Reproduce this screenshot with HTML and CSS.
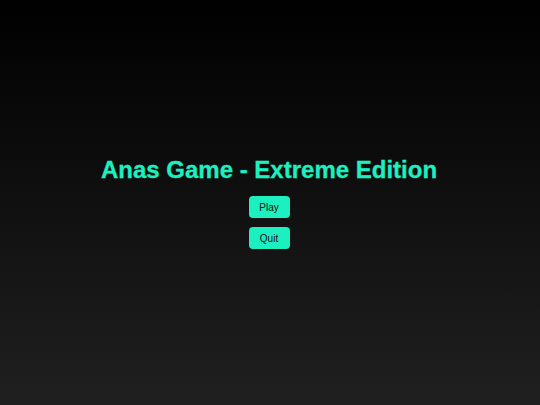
FILE: index.html
```html
<!DOCTYPE html>
<html>
<head>
<meta charset="utf-8">
<link rel="stylesheet" href="styles.css">
</head>
<body>
<div class="screen">
  <h1 class="title">Anas Game - Extreme Edition</h1>
  <div class="menu">
    <button class="btn">Play</button>
    <button class="btn">Quit</button>
  </div>
</div>
</body>
</html>
```
FILE: styles.css
```css
html, body {
  margin: 0;
  padding: 0;
  width: 540px;
  height: 405px;
  overflow: hidden;
}
body {
  background: linear-gradient(to bottom, #000000, #202020);
  font-family: "Liberation Sans", Arial, sans-serif;
}
.screen {
  height: 405px;
  display: flex;
  flex-direction: column;
  align-items: center;
  justify-content: center;
}
.title {
  margin: 0 0 12px 0;
  color: #1cf0c0;
  font-size: 24px;
  font-weight: bold;
  line-height: 28px;
  -webkit-text-stroke: 0.3px #1cf0c0;
  transform: translateX(-1px);
}
.menu {
  display: flex;
  flex-direction: column;
  align-items: center;
  gap: 9px;
  transform: translateX(-1px);
}
.btn {
  width: 41px;
  height: 22px;
  border: none;
  border-radius: 4px;
  background: #1cf0c0;
  color: #111;
  font-family: "Liberation Sans", Arial, sans-serif;
  font-size: 10px;
  padding: 0;
}
```
